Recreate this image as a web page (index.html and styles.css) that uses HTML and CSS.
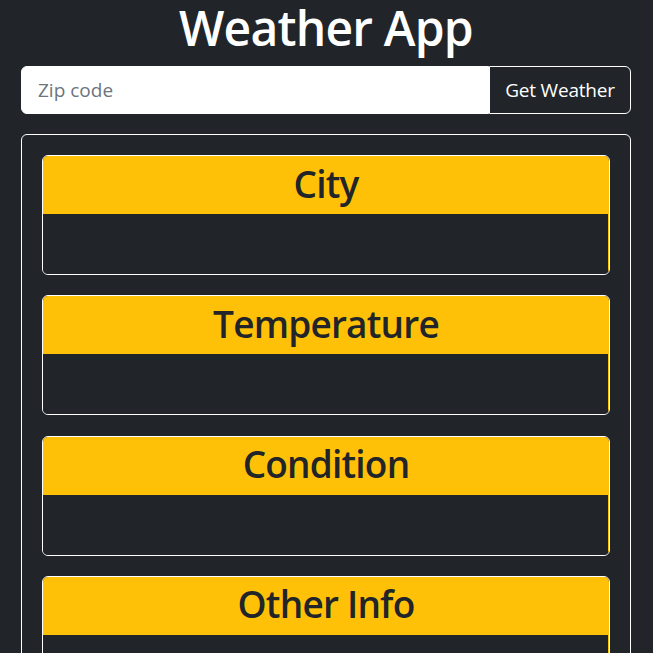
FILE: index.html
```html
<!DOCTYPE html>
<html>
<head>
<meta charset="utf-8">
<link rel="stylesheet" href="styles.css">
</head>
<body>
<div class="app">
  <h1 class="title">Weather App</h1>
  <form class="search">
    <input class="zip" type="text" placeholder="Zip code">
    <button class="go" type="button">Get Weather</button>
  </form>
  <div class="panel">
    <div class="card">
      <div class="card-head">City</div>
      <div class="card-body"></div>
    </div>
    <div class="card">
      <div class="card-head">Temperature</div>
      <div class="card-body"></div>
    </div>
    <div class="card">
      <div class="card-head">Condition</div>
      <div class="card-body"></div>
    </div>
    <div class="card">
      <div class="card-head">Other Info</div>
      <div class="card-body"></div>
    </div>
  </div>
</div>
</body>
</html>
```
FILE: styles.css
```css
html, body {
  margin: 0;
  padding: 0;
  background: #212529;
  font-family: "Open Sans", "Noto Sans", sans-serif;
  color: #fff;
}
.app {
  padding: 0 22px 0 21px;
  height: 653px;
  overflow: hidden;
}
.title {
  margin: 0;
  height: 60px;
  font-size: 48px;
  font-weight: 600;
  line-height: 56px;
  text-align: center;
  letter-spacing: -0.8px;
}
.search {
  display: flex;
  margin: 6px 0 20px;
  height: 48px;
}
.zip {
  flex: 1;
  min-width: 0;
  border: 1px solid #fff;
  border-radius: 6px 0 0 6px;
  background: #fff;
  padding: 0 16px;
  font-family: inherit;
  font-size: 19px;
  color: #212529;
  outline: none;
}
.zip::placeholder {
  color: #6c757d;
}
.go {
  width: 142px;
  border: 1px solid #fff;
  border-radius: 0 6px 6px 0;
  background: #212529;
  color: #fff;
  font-family: inherit;
  font-size: 19px;
  padding: 0;
  letter-spacing: -0.2px;
}
.panel {
  border: 1px solid #fff;
  border-radius: 6px;
  padding: 20px 20px 0;
  display: flex;
  flex-direction: column;
  gap: 20.33px;
  height: 600px;
}
.card {
  border: 1px solid #fff;
  border-radius: 6px;
  overflow: hidden;
  flex-shrink: 0;
}
.card-head {
  background: #ffc107;
  color: #212529;
  height: 58px;
  box-sizing: border-box;
  padding-bottom: 4px;
  display: flex;
  align-items: center;
  justify-content: center;
  font-size: 37px;
  font-weight: 600;
  letter-spacing: -0.8px;
}
.card-body {
  height: 60px;
  background: #212529;
  box-shadow: inset -1px 0 #ffc107;
}
```
